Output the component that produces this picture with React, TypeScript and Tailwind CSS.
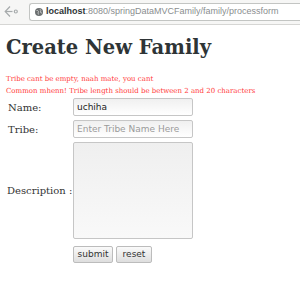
import React from 'react';

function BackArrow() {
  return (
    <svg width="15" height="13" viewBox="0 0 15 13" fill="none" stroke="#a7abac" strokeWidth="1.2">
      <path d="M6 1.5 L1.2 6.5 L6 11.5" />
      <path d="M1.5 6.5 H8.5" />
      <circle cx="11.8" cy="6.5" r="1.5" />
    </svg>
  );
}

function Globe() {
  return (
    <svg width="8" height="8" viewBox="0 0 8 8">
      <circle cx="4" cy="4" r="4" fill="#6b6f70" />
      <path d="M1.5 2.5 Q3 2 3.5 3.5 Q2.5 5 3.5 6.5 M5 1.2 Q6.5 2.5 5.5 4 Q6 5.5 7 5" stroke="#d8d8d8" strokeWidth="0.8" fill="none" />
    </svg>
  );
}

export default function App() {
  return (
    <div className="w-[300px] h-[290px] bg-white overflow-hidden">
      {/* Browser toolbar */}
      <div className="h-[25px] flex items-center gap-[10px] pl-[4px] pb-[1px] bg-[#f6f6f5] border-b border-[#d6d6d4]">
        <BackArrow />
        <div className="flex-1 h-[18px] flex items-center gap-[3px] pl-[5px] bg-white border border-r-0 border-[#c3c5c3] rounded-l-[3px] font-['Liberation_Sans',sans-serif] text-[9px] whitespace-nowrap overflow-hidden">
          <Globe />
          <span>
            <span className="font-bold text-[#2e3436]">localhost</span>
            <span className="text-[#8a8e8f]">:8080/springDataMVCFamily/family/processform</span>
          </span>
        </div>
      </div>

      <div className="pl-[6px] pt-[11px] font-['DejaVu_Serif',serif]">
        <h1 className="text-[19.5px] leading-[24px] font-bold text-[#2e3436]">Create New Family</h1>

        <div className="mt-[13px] text-[7px] leading-[12px] text-[#ff3b3b]">
          <div>Tribe cant be empty, naah mate, you cant</div>
          <div>Common mhenn! Tribe length should be between 2 and 20 characters</div>
        </div>

        <div className="mt-[1px] grid grid-cols-[67px_120px] gap-y-[4px] items-center text-[10px] text-[#333]">
          <label className="pl-[2px]">Name:</label>
          <input
            defaultValue="uchiha"
            className="h-[18px] px-[3px] border border-[#c6c6c6] rounded-[2px] bg-gradient-to-b from-[#f0f0f0] to-white font-['DejaVu_Sans',sans-serif] text-[9px] text-[#222] outline-none"
          />
          <label className="pl-[2px]">Tribe:</label>
          <input
            placeholder="Enter Tribe Name Here"
            className="h-[18px] px-[3px] border border-[#c6c6c6] rounded-[2px] bg-gradient-to-b from-[#f0f0f0] to-white font-['DejaVu_Sans',sans-serif] text-[9px] placeholder:text-[#9a9a9a] outline-none"
          />
          <label className="pl-[1px] whitespace-nowrap">Description :</label>
          <textarea className="h-[97px] resize-none border border-[#c6c6c6] rounded-[2px] bg-gradient-to-b from-[#efefef] to-[#f9f9f9] outline-none" />
          <div />
          <div className="pt-[3px] flex gap-[3px] font-['DejaVu_Sans',sans-serif] text-[9px] text-[#333]">
            <button className="w-[40px] h-[17px] border border-[#bcbcbc] rounded-[2px] bg-gradient-to-b from-[#fafafa] to-[#dedede]">submit</button>
            <button className="w-[36px] h-[17px] border border-[#bcbcbc] rounded-[2px] bg-gradient-to-b from-[#fafafa] to-[#dedede]">reset</button>
          </div>
        </div>
      </div>
    </div>
  );
}
